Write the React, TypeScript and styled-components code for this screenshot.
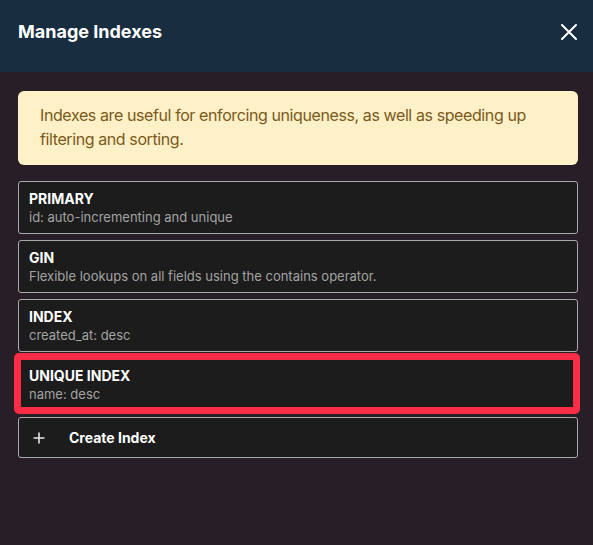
import React from 'react'
import styled, { createGlobalStyle } from 'styled-components'

const GlobalStyle = createGlobalStyle`
  html, body {
    margin: 0;
    height: 100%;
    background: #281e28;
  }
  #root {
    min-height: 100vh;
  }
  * {
    box-sizing: border-box;
  }
`

const Modal = styled.div`
  min-height: 100vh;
  display: flex;
  flex-direction: column;
  background: #281e28;
  font-family: Inter, 'Noto Sans', sans-serif;
`

const Header = styled.header`
  height: 72px;
  padding: 20px 16px 0 18px;
  display: flex;
  align-items: flex-start;
  justify-content: space-between;
  background: #182d3f;
`

const Title = styled.h2`
  margin: 0;
  font-size: 18px;
  line-height: 24px;
  font-weight: 700;
  color: #ffffff;
`

const CloseButton = styled.button`
  width: 16px;
  height: 16px;
  margin-top: 4px;
  padding: 0;
  border: 0;
  background: none;
  color: #ffffff;
  cursor: pointer;
  display: flex;
`

const Body = styled.div`
  padding: 19px 15px 0 18px;
  display: flex;
  flex-direction: column;
`

const Callout = styled.div`
  padding: 12px 20px 14px 22px;
  border-radius: 6px;
  background: #fef0c7;
  color: #7b5a1b;
  font-size: 16px;
  line-height: 24px;
  letter-spacing: -0.4px;
`

const IndexList = styled.div`
  margin-top: 16px;
  display: flex;
  flex-direction: column;
  gap: 6px;
`

const Card = styled.div<{ $highlighted?: boolean }>`
  position: relative;
  padding: 8px 10px 7px;
  border: 1px solid #a9a9a9;
  border-radius: 3px;
  background: #1c1c1c;

  ${p =>
    p.$highlighted &&
    `
    &::after {
      content: '';
      position: absolute;
      top: -6px;
      left: -5px;
      right: -3px;
      bottom: -4px;
      border: 7px solid #fb2c45;
      border-radius: 5px;
      pointer-events: none;
    }
  `}
`

const IndexName = styled.div`
  font-size: 14px;
  line-height: 18px;
  font-weight: 700;
  color: #ffffff;
`

const IndexDetail = styled.div`
  font-size: 13px;
  line-height: 18px;
  color: #a3a3a3;
`

const CreateButton = styled.button`
  display: flex;
  align-items: center;
  gap: 24px;
  height: 41px;
  padding: 0 14px;
  border: 1px solid #a9a9a9;
  border-radius: 3px;
  background: #1c1c1c;
  color: #ffffff;
  font-family: inherit;
  font-size: 14px;
  font-weight: 700;
  text-align: left;
  cursor: pointer;
`

const indexes = [
  { name: 'PRIMARY', detail: 'id: auto-incrementing and unique' },
  { name: 'GIN', detail: 'Flexible lookups on all fields using the contains operator.' },
  { name: 'INDEX', detail: 'created_at: desc' },
  { name: 'UNIQUE INDEX', detail: 'name: desc', highlighted: true }
]

function CloseIcon() {
  return (
    <svg width="16" height="16" viewBox="0 0 16 16" fill="none">
      <path d="M1 1L15 15M15 1L1 15" stroke="currentColor" strokeWidth="2" strokeLinecap="round" />
    </svg>
  )
}

function PlusIcon() {
  return (
    <svg width="12" height="12" viewBox="0 0 12 12" fill="none">
      <path d="M6 0.5V11.5M0.5 6H11.5" stroke="#e6e6e6" strokeWidth="1.6" />
    </svg>
  )
}

export default function App() {
  return (
    <>
      <GlobalStyle />
      <Modal>
        <Header>
          <Title>Manage Indexes</Title>
          <CloseButton aria-label="Close">
            <CloseIcon />
          </CloseButton>
        </Header>
        <Body>
          <Callout>
            Indexes are useful for enforcing uniqueness, as well as speeding up filtering and sorting.
          </Callout>
          <IndexList>
            {indexes.map(index => (
              <Card key={index.name} $highlighted={index.highlighted}>
                <IndexName>{index.name}</IndexName>
                <IndexDetail>{index.detail}</IndexDetail>
              </Card>
            ))}
            <CreateButton>
              <PlusIcon />
              Create Index
            </CreateButton>
          </IndexList>
        </Body>
      </Modal>
    </>
  )
}
